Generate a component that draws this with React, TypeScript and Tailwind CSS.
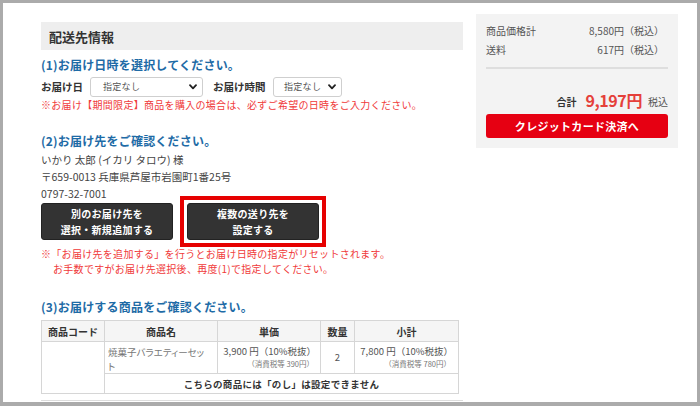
import React from "react";

const Chevron = () => (
  <svg width="8" height="6" viewBox="0 0 8 6" className="shrink-0">
    <path d="M1 1.2 L4 4.4 L7 1.2" fill="none" stroke="#222" strokeWidth="1.8" strokeLinecap="round" strokeLinejoin="round" />
  </svg>
);

const Select = ({ w, pl }: { w: string; pl: string }) => (
  <div className={`${w} ${pl} h-[20px] shrink-0 border border-[#cfcfcf] rounded-[3px] bg-white flex items-center justify-between pr-[5px]`}>
    <span className="text-[9px] text-[#555] whitespace-nowrap tracking-[0.3px]">指定なし</span>
    <Chevron />
  </div>
);

export default function App() {
  return (
    <div
      className="w-[700px] h-[406px] overflow-hidden bg-white border-t-[3px] border-l-[3px] border-r-[3px] border-b-[4px] border-[#ababab] flex items-start pl-[38px] pt-[11px]"
      style={{ fontFamily: '"Noto Sans CJK JP", "Noto Sans", sans-serif' }}
    >
      {/* left column */}
      <div className="w-[422px] mt-[8px] flex flex-col">
        <div className="h-[28px] bg-[#eeeeee] flex items-center pl-[8px]">
          <span className="text-[13px] font-bold text-[#333] leading-none">配送先情報</span>
        </div>

        <div className="mt-[6px] text-[12px] leading-[18px] font-bold text-[#1e6ba6] tracking-[0.2px]">(1)お届け日時を選択してください。</div>

        <div className="mt-[3px] flex items-center h-[20px]">
          <span className="text-[10.5px] font-bold text-[#333] w-[49px] whitespace-nowrap">お届け日</span>
          <Select w="w-[113px]" pl="pl-[12px]" />
          <span className="text-[10.5px] font-bold text-[#333] ml-[10px] w-[60px] whitespace-nowrap">お届け時間</span>
          <Select w="w-[69px]" pl="pl-[10px]" />
        </div>

        <div className="mt-[1px] text-[10px] leading-[14px] text-[#f03a3a] tracking-[0.3px] whitespace-nowrap">
          ※お届け【期間限定】商品を購入の場合は、必ずご希望の日時をご入力ください。
        </div>

        <div className="mt-[20px] text-[12px] leading-[18px] font-bold text-[#1e6ba6] tracking-[0.2px]">(2)お届け先をご確認ください。</div>

        <div className="mt-[1px] text-[10.5px] leading-[17px] text-[#444]">
          <div>いかり 太郎 (イカリ タロウ) 様</div>
          <div>〒659-0013 兵庫県芦屋市岩園町1番25号</div>
          <div>0797-32-7001</div>
        </div>

        <div className="-mt-[6px] flex items-center">
          <div className="w-[132px] h-[37px] bg-[#333333] rounded-[3px] border border-[#222] flex flex-col items-center justify-center text-white text-[10px] leading-[16px] font-bold tracking-[0.3px]">
            <span>別のお届け先を</span>
            <span>選択・新規追加する</span>
          </div>
          <div className="ml-[7px] border-[4px] border-[#e60000] p-[3px]">
            <div className="w-[132px] h-[37px] bg-[#333333] rounded-[3px] border border-[#222] flex flex-col items-center justify-center text-white text-[10px] leading-[16px] font-bold tracking-[0.3px]">
              <span>複数の送り先を</span>
              <span>設定する</span>
            </div>
          </div>
        </div>

        <div className="-mt-[1px] text-[10px] leading-[15px] text-[#f03a3a] tracking-[0.3px] whitespace-nowrap">
          <div>※「お届け先を追加する」を行うとお届け日時の指定がリセットされます。</div>
          <div className="pl-[12px]">お手数ですがお届け先選択後、再度(1)で指定してください。</div>
        </div>

        <div className="mt-[22px] text-[12px] leading-[18px] font-bold text-[#1e6ba6] tracking-[0.2px]">(3)お届けする商品をご確認ください。</div>

        <table className="mt-[4px] w-[417px] border-collapse text-[#333] table-fixed">
          <colgroup>
            <col className="w-[63px]" />
            <col className="w-[113px]" />
            <col className="w-[103px]" />
            <col className="w-[34px]" />
            <col className="w-[104px]" />
          </colgroup>
          <thead>
            <tr className="h-[21px] bg-[#f5f5f5] text-[10px]">
              <th className="border border-[#d6d6d6] font-bold p-0">商品コード</th>
              <th className="border border-[#d6d6d6] font-bold p-0">商品名</th>
              <th className="border border-[#d6d6d6] font-bold p-0">単価</th>
              <th className="border border-[#d6d6d6] font-bold p-0">数量</th>
              <th className="border border-[#d6d6d6] font-bold p-0">小計</th>
            </tr>
          </thead>
          <tbody>
            <tr className="h-[31px]">
              <td rowSpan={2} className="border border-[#d6d6d6] p-0"></td>
              <td className="border border-[#d6d6d6] align-top pl-[3px] pt-[3px] text-[9.5px] leading-[14px] text-[#777] [font-feature-settings:'palt']">
                焼菓子バラエティーセッ<br />ト
              </td>
              <td className="border border-[#d6d6d6] text-right pr-[4px] align-top pt-[3px] whitespace-nowrap">
                <div className="text-[9.5px] leading-[13px] text-[#555]">3,900 円（10%税抜）</div>
                <div className="text-[7.5px] leading-[11px] text-[#777] pr-[2px]">（消費税等 390円）</div>
              </td>
              <td className="border border-[#d6d6d6] text-center text-[9.5px] text-[#555] p-0">2</td>
              <td className="border border-[#d6d6d6] text-right pr-[5px] align-top pt-[3px] whitespace-nowrap">
                <div className="text-[9.5px] leading-[13px] text-[#555]">7,800 円（10%税抜）</div>
                <div className="text-[7.5px] leading-[11px] text-[#777] pr-[2px]">（消費税等 780円）</div>
              </td>
            </tr>
            <tr className="h-[20px]">
              <td colSpan={4} className="border border-[#d6d6d6] text-center text-[9.5px] leading-[12px] font-bold text-[#333] tracking-[0.3px] p-0">
                こちらの商品には「のし」は設定できません
              </td>
            </tr>
          </tbody>
        </table>
        <div className="mt-[6px] h-[1px] bg-[#dddddd]"></div>
      </div>

      {/* right panel */}
      <div className="ml-[13px] w-[202px] bg-[#f3f3f3] px-[10px] pt-[8px] pb-[10px]">
        <div className="flex justify-between items-center h-[17px] text-[10px] text-[#555]">
          <span>商品価格計</span>
          <span className="pr-[4px]">8,580円（税込）</span>
        </div>
        <div className="mt-[2px] flex justify-between items-center h-[17px] text-[10px] text-[#555]">
          <span>送料</span>
          <span className="pr-[4px]">617円（税込）</span>
        </div>
        <div className="mt-[9px] h-[2px] bg-[#dedede]"></div>
        <div className="mt-[20px] flex items-end justify-end h-[22px]">
          <span className="text-[10px] font-bold text-[#333] mb-[2px]">合計</span>
          <span className="ml-[9px] text-[16px] leading-[22px] font-bold text-[#e5403a] tracking-[-0.4px]">9,197円</span>
          <span className="ml-[6px] text-[10px] text-[#555] mb-[2px]">税込</span>
        </div>
        <div className="mt-[3px] h-[24px] rounded-[3px] bg-[#e60012] flex items-center justify-center text-white text-[11px] font-bold tracking-[0.3px]">
          クレジットカード決済へ
        </div>
      </div>
    </div>
  );
}
